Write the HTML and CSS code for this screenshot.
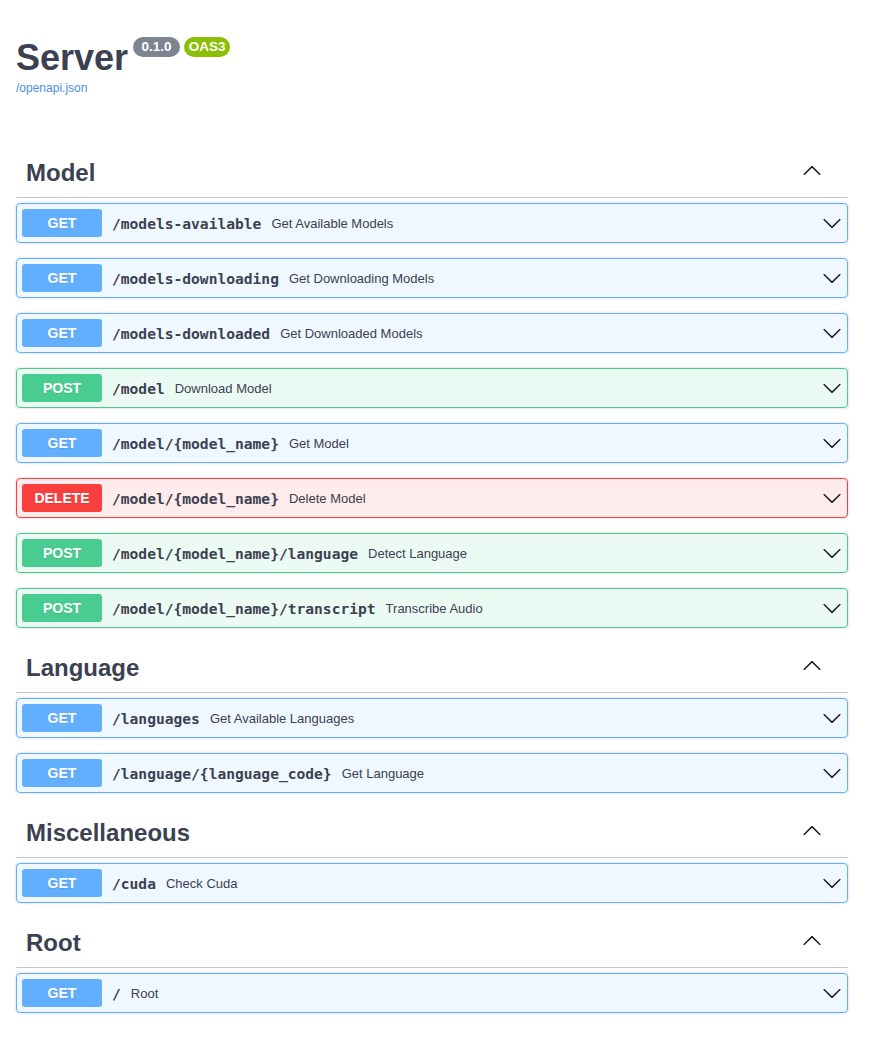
FILE: index.html
```html
<!DOCTYPE html>
<html lang="en">
<head>
<meta charset="utf-8">
<title>Server - Swagger UI</title>
<link rel="stylesheet" href="styles.css">
</head>
<body>
<svg class="defs" xmlns="http://www.w3.org/2000/svg" width="0" height="0" aria-hidden="true">
  <symbol id="arrow-down" viewBox="0 0 20 20">
    <path d="M17.418 6.109c.272-.268.709-.268.979 0s.271.701 0 .969l-7.908 7.83c-.27.268-.707.268-.979 0l-7.908-7.83c-.27-.268-.27-.701 0-.969.271-.268.709-.268.979 0L10 13.25l7.418-7.141z"/>
  </symbol>
  <symbol id="arrow-up" viewBox="0 0 20 20">
    <path d="M17.418 14.908c.272.268.709.268.979 0s.271-.701 0-.969l-7.908-7.83c-.27-.268-.707-.268-.979 0l-7.908 7.83c-.27.268-.27.701 0 .969.271.268.709.268.979 0L10 7.767l7.418 7.141z"/>
  </symbol>
</svg>

<div class="wrapper">
  <header class="info">
    <h2 class="title">Server<span class="badge badge-version">0.1.0</span><span class="badge badge-oas">OAS3</span></h2>
    <a class="url" href="#">/openapi.json</a>
  </header>

  <section class="tag-section">
    <h3 class="tag"><span class="tag-name">Model</span><svg class="tag-arrow"><use href="#arrow-up"/></svg></h3>
    <div class="opblock get"><span class="method">GET</span><span class="path">/models-available</span><span class="desc">Get Available Models</span><svg class="chev"><use href="#arrow-down"/></svg></div>
    <div class="opblock get"><span class="method">GET</span><span class="path">/models-downloading</span><span class="desc">Get Downloading Models</span><svg class="chev"><use href="#arrow-down"/></svg></div>
    <div class="opblock get"><span class="method">GET</span><span class="path">/models-downloaded</span><span class="desc">Get Downloaded Models</span><svg class="chev"><use href="#arrow-down"/></svg></div>
    <div class="opblock post"><span class="method">POST</span><span class="path">/model</span><span class="desc">Download Model</span><svg class="chev"><use href="#arrow-down"/></svg></div>
    <div class="opblock get"><span class="method">GET</span><span class="path">/model/{model_name}</span><span class="desc">Get Model</span><svg class="chev"><use href="#arrow-down"/></svg></div>
    <div class="opblock delete"><span class="method">DELETE</span><span class="path">/model/{model_name}</span><span class="desc">Delete Model</span><svg class="chev"><use href="#arrow-down"/></svg></div>
    <div class="opblock post"><span class="method">POST</span><span class="path">/model/{model_name}/language</span><span class="desc">Detect Language</span><svg class="chev"><use href="#arrow-down"/></svg></div>
    <div class="opblock post"><span class="method">POST</span><span class="path">/model/{model_name}/transcript</span><span class="desc">Transcribe Audio</span><svg class="chev"><use href="#arrow-down"/></svg></div>
  </section>

  <section class="tag-section">
    <h3 class="tag"><span class="tag-name">Language</span><svg class="tag-arrow"><use href="#arrow-up"/></svg></h3>
    <div class="opblock get"><span class="method">GET</span><span class="path">/languages</span><span class="desc">Get Available Languages</span><svg class="chev"><use href="#arrow-down"/></svg></div>
    <div class="opblock get"><span class="method">GET</span><span class="path">/language/{language_code}</span><span class="desc">Get Language</span><svg class="chev"><use href="#arrow-down"/></svg></div>
  </section>

  <section class="tag-section">
    <h3 class="tag"><span class="tag-name">Miscellaneous</span><svg class="tag-arrow"><use href="#arrow-up"/></svg></h3>
    <div class="opblock get"><span class="method">GET</span><span class="path">/cuda</span><span class="desc">Check Cuda</span><svg class="chev"><use href="#arrow-down"/></svg></div>
  </section>

  <section class="tag-section">
    <h3 class="tag"><span class="tag-name">Root</span><svg class="tag-arrow"><use href="#arrow-up"/></svg></h3>
    <div class="opblock get"><span class="method">GET</span><span class="path">/</span><span class="desc">Root</span><svg class="chev"><use href="#arrow-down"/></svg></div>
  </section>
</div>
</body>
</html>
```

FILE: styles.css
```css
* {
  box-sizing: border-box;
}

html, body {
  margin: 0;
  padding: 0;
  background: #ffffff;
}

body {
  font-family: "Liberation Sans", Arial, sans-serif;
  color: #3b4151;
}

.defs {
  position: absolute;
  width: 0;
  height: 0;
  overflow: hidden;
}

.wrapper {
  padding: 0 23px 0 16px;
}

/* ---------- info header ---------- */
.info {
  padding-top: 37px;
  margin-bottom: 53px;
}

.title {
  display: flex;
  align-items: flex-start;
  margin: 0;
  font-size: 36px;
  line-height: 41px;
  font-weight: 700;
  color: #3b4151;
}

.badge {
  display: inline-block;
  height: 20px;
  border-radius: 57px;
  color: #ffffff;
  font-size: 13.5px;
  font-weight: 700;
  line-height: 20px;
  text-align: center;
  margin-left: 5px;
}

.badge-version {
  background: #7d8492;
  width: 47px;
}

.badge-oas {
  background: #89bf04;
  width: 46px;
  margin-left: 4px;
}

.url {
  display: block;
  margin-top: 3px;
  font-size: 12px;
  line-height: 14px;
  color: #4990e2;
  text-decoration: none;
}

/* ---------- tag sections ---------- */
.tag {
  display: flex;
  align-items: flex-start;
  margin: 0 0 5px;
  padding: 10px 26px 10px 10px;
  border-bottom: 1px solid rgba(59, 65, 81, 0.3);
  font-size: 24px;
  line-height: 29px;
  font-weight: 700;
  color: #3b4151;
}

.tag-name {
  flex: 1;
}

.tag-arrow {
  width: 20px;
  height: 20px;
  margin-top: 2px;
  fill: #1a1a1a;
  flex-shrink: 0;
}

/* ---------- operation blocks ---------- */
.opblock {
  display: flex;
  align-items: center;
  margin: 0 0 15px;
  padding: 5px;
  border: 1px solid;
  border-radius: 4px;
  box-shadow: 0 0 3px rgba(0, 0, 0, 0.19);
}

.opblock.get {
  background: rgba(97, 175, 254, 0.1);
  border-color: #61affe;
}

.opblock.post {
  background: rgba(73, 204, 144, 0.1);
  border-color: #49cc90;
}

.opblock.delete {
  background: rgba(249, 62, 62, 0.1);
  border-color: #f93e3e;
}

.method {
  display: inline-block;
  width: 80px;
  flex-shrink: 0;
  padding: 6px 0;
  border-radius: 3px;
  font-size: 14px;
  line-height: 16px;
  font-weight: 700;
  color: #ffffff;
  text-align: center;
  text-shadow: 0 1px 0 rgba(0, 0, 0, 0.1);
}

.get .method {
  background: #61affe;
}

.post .method {
  background: #49cc90;
}

.delete .method {
  background: #f93e3e;
}

.path {
  padding: 0 10px;
  font-family: "DejaVu Sans Mono", "Liberation Mono", monospace;
  font-size: 14.6px;
  font-weight: 700;
  color: #3b4151;
  white-space: nowrap;
}

.desc {
  flex: 1;
  font-size: 13px;
  color: #3b4151;
  white-space: nowrap;
}

.chev {
  width: 20px;
  height: 20px;
  flex-shrink: 0;
  fill: #1a1a1a;
}
```
